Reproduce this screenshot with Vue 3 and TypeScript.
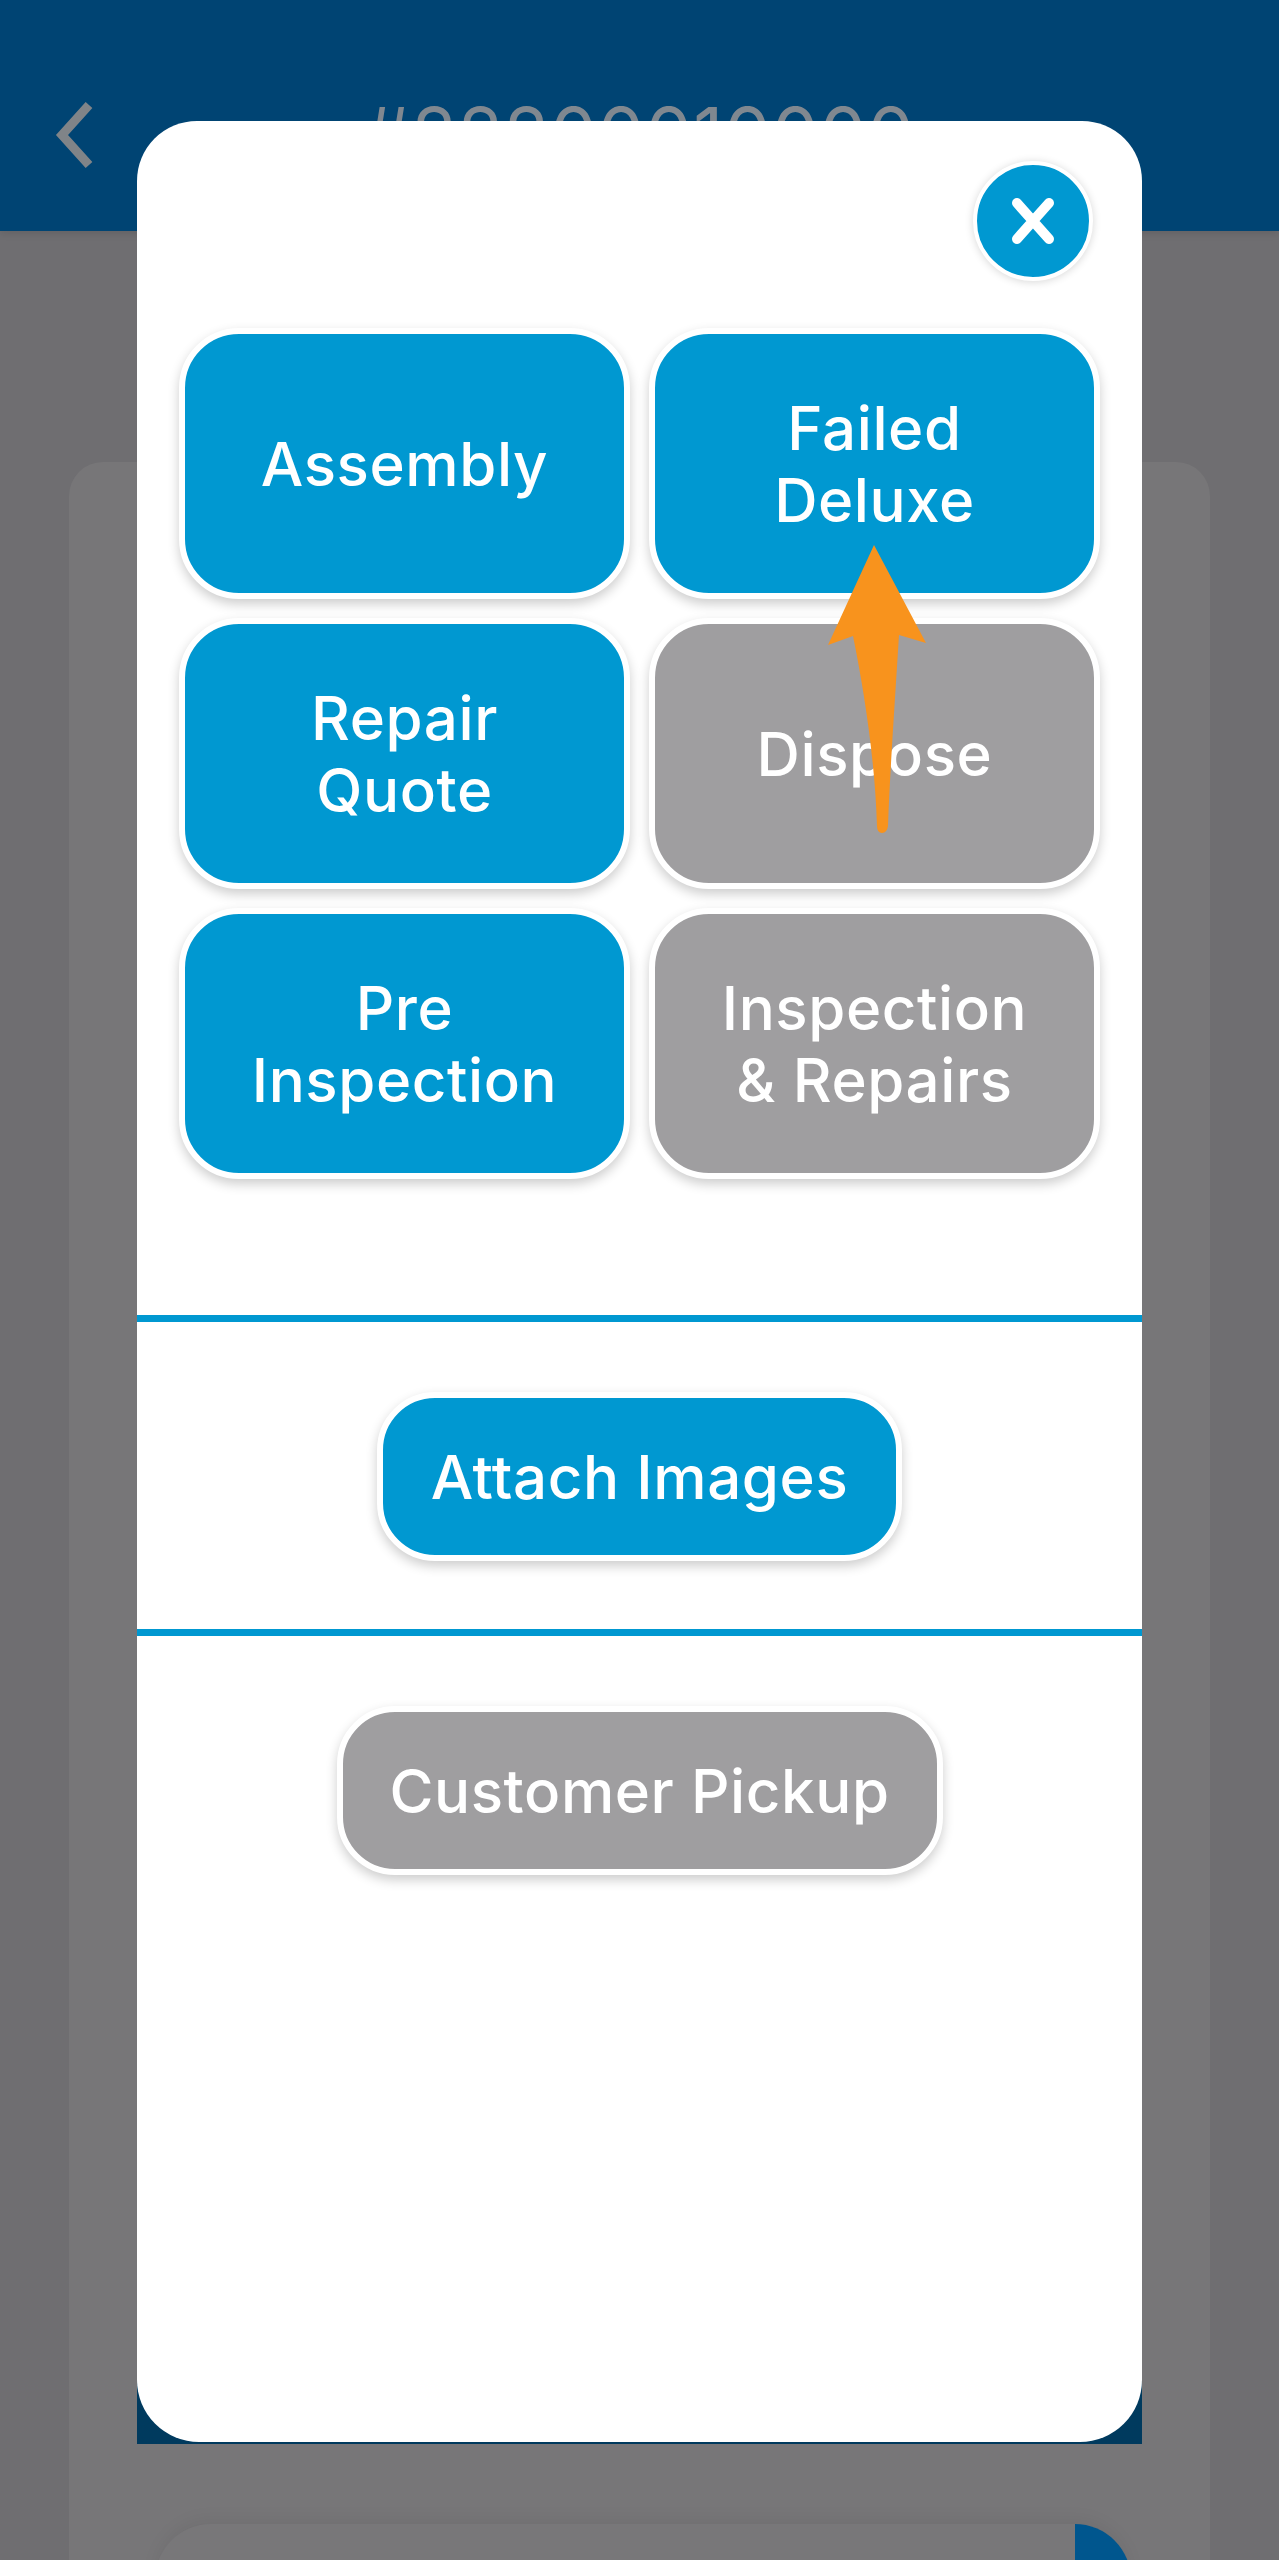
<script setup lang="ts">
interface Action { lines: string[]; active: boolean }
const actions: Action[] = [
  { lines: ['Assembly'], active: true },
  { lines: ['Failed', 'Deluxe'], active: true },
  { lines: ['Repair', 'Quote'], active: true },
  { lines: ['Dispose'], active: false },
  { lines: ['Pre', 'Inspection'], active: true },
  { lines: ['Inspection', '& Repairs'], active: false },
]
</script>

<template>
  <div class="screen">
    <header class="header">
      <svg class="back" viewBox="0 0 50 80" width="50" height="80">
        <path d="M39 10 L12 40 L39 70" fill="none" stroke="#808488" stroke-width="9" />
      </svg>
      <div class="title">#22200010000</div>
    </header>
    <div class="backdrop">
      <div class="card">
        <div class="inner"><span class="inner-tab"></span></div>
      </div>
    </div>

    <div class="modal-wrap">
      <div class="modal">
        <div class="close-row">
          <button class="close" aria-label="Close">
            <svg viewBox="0 0 48 48" width="48" height="48">
              <path d="M8 6 L40 42 M40 6 L8 42" stroke="#fff" stroke-width="10" stroke-linecap="round" fill="none" />
            </svg>
          </button>
        </div>
        <div class="grid">
          <button v-for="a in actions" :key="a.lines.join(' ')" class="btn tile" :class="{ off: !a.active }">
            <span v-for="l in a.lines" :key="l">{{ l }}</span>
          </button>
        </div>
        <div class="section first">
          <button class="btn pill">Attach Images</button>
        </div>
        <div class="section second">
          <button class="btn pill off">Customer Pickup</button>
        </div>
      </div>
    </div>

    <svg class="arrow" viewBox="0 0 1279 2560" width="1279" height="2560">
      <path d="M874 545 L926 643 L899 635 C895 700 890 770 888 826 Q887 833 882 833 Q877 833 877 826 C875 760 864 690 853 636 L828 645 Z" fill="#f8931d" />
    </svg>
  </div>
</template>

<style>
html, body { margin: 0; background: #6f6e71; }
</style>

<style scoped>
.screen {
  position: relative;
  width: 1279px;
  height: 2560px;
  overflow: hidden;
  background: #6f6e71;
  font-family: Inter, "Liberation Sans", sans-serif;
}
.header {
  height: 231px;
  background: #004473;
  position: relative;
  display: flex;
  justify-content: center;
  box-shadow: 0 2px 8px rgba(0, 0, 0, 0.12);
}
.back {
  position: absolute;
  left: 50px;
  top: 95px;
}
.title {
  margin-top: 94px;
  font-size: 74px;
  line-height: 80px;
  color: #808890;
  letter-spacing: 1px;
}
.backdrop {
  padding: 231px 69px 0;
}
.card {
  height: 2098px;
  background: #777678;
  border-radius: 34px 34px 0 0;
  padding: 2062px 79px 0 86px;
  box-sizing: border-box;
}
.inner {
  height: 100px;
  background: #787779;
  border-radius: 56px 56px 0 0;
  box-shadow: 0 -6px 16px rgba(0, 0, 0, 0.05);
  position: relative;
  overflow: hidden;
}
.inner-tab {
  position: absolute;
  right: 0;
  top: 0;
  width: 56px;
  height: 100px;
  background: #00568e;
}
.modal-wrap {
  position: absolute;
  left: 137px;
  top: 121px;
  width: 1005px;
  height: 2323px;
  background: linear-gradient(to bottom, transparent 0, transparent 2200px, #003a5e 2200px);
}
.modal {
  height: 2321px;
  background: #fff;
  border-radius: 60px 60px 62px 62px;
  display: flex;
  flex-direction: column;
}
.close-row {
  height: 212px;
  display: flex;
  justify-content: flex-end;
  padding: 40px 49px 0 0;
  box-sizing: border-box;
}
.close {
  width: 120px;
  height: 120px;
  padding: 0;
  box-sizing: border-box;
  border-radius: 50%;
  background: #0098d1;
  border: 4px solid #fff;
  box-shadow: 0 1px 8px rgba(0, 0, 0, 0.16);
  display: flex;
  align-items: center;
  justify-content: center;
}
.grid {
  display: grid;
  grid-template-columns: 451px 451px;
  grid-auto-rows: 271px;
  gap: 19px;
  padding-left: 42px;
  margin-top: -5px;
}
.btn {
  box-sizing: border-box;
  border: 6px solid #fff;
  background: #0098d1;
  color: #fff;
  font-family: inherit;
  font-weight: 500;
  font-size: 60px;
  line-height: 72px;
  letter-spacing: 0.6px;
  box-shadow: 0 5px 12px rgba(0, 0, 0, 0.2);
  padding: 0;
}
.btn.off {
  background: #9f9ea0;
}
.tile {
  border-radius: 60px;
  display: flex;
  flex-direction: column;
  align-items: center;
  justify-content: center;
}
.section {
  display: flex;
  justify-content: center;
  border-top: 7px solid #0098d1;
  height: 314px;
  box-sizing: border-box;
  padding-top: 70px;
}
.section.first {
  margin-top: 136px;
}
.pill {
  height: 169px;
  border-radius: 58px;
}
.section .pill:not(.off) {
  width: 525px;
}
.section .pill.off {
  width: 606px;
}
.arrow {
  position: absolute;
  left: 0;
  top: 0;
  pointer-events: none;
}
</style>
